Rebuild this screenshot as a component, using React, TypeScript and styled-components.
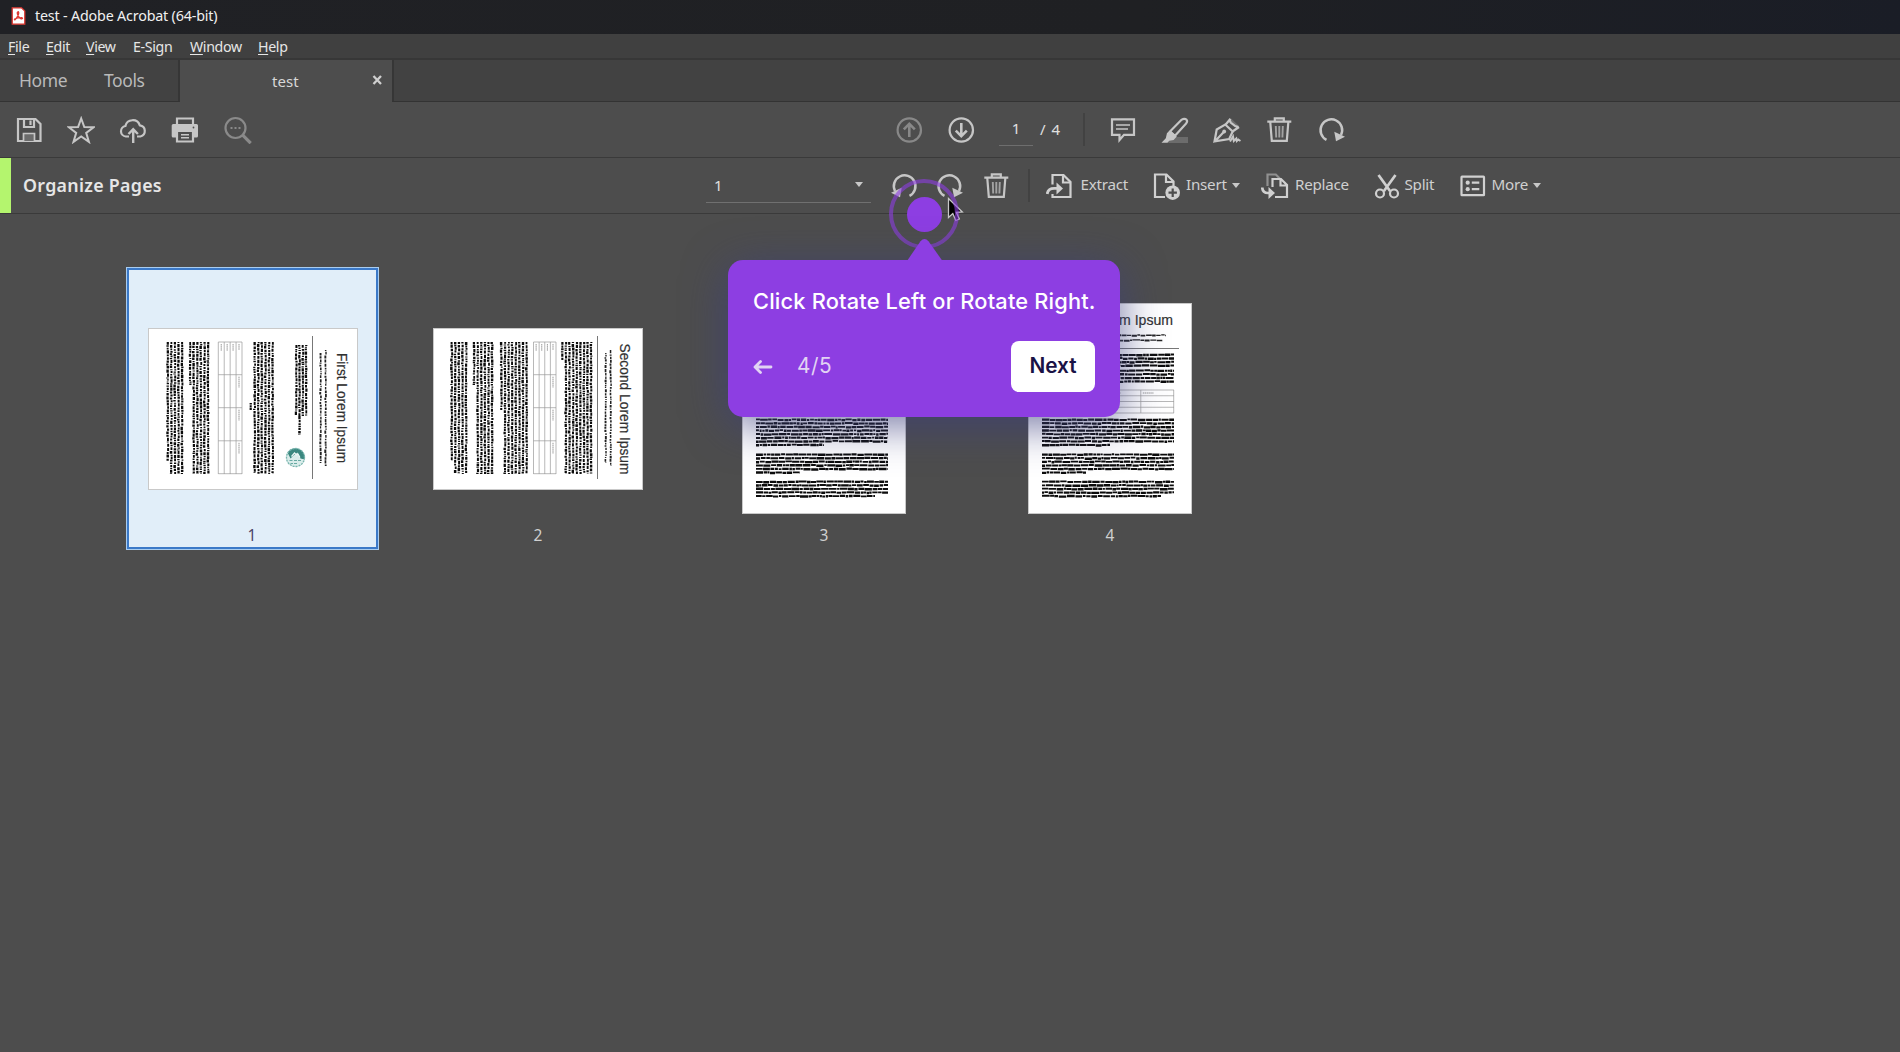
import React from "react";
import styled, { createGlobalStyle } from "styled-components";

const uiFont = `"Noto Sans", "Open Sans", sans-serif`;

const GlobalStyle = createGlobalStyle`
  * { box-sizing: border-box; }
  body { margin: 0; background: #4d4d4d; font-family: ${uiFont}; overflow: hidden; }
`;

/* ---------- frame ---------- */
const Window = styled.div`
  position: relative;
  width: 1900px;
  height: 1052px;
  display: flex;
  flex-direction: column;
  background: #4d4d4d;
  color: #d8d8d8;
  overflow: hidden;
`;

const TitleBar = styled.header`
  height: 34px;
  flex: none;
  display: flex;
  align-items: center;
  padding: 0 0 2px 11px;
  gap: 9px;
  background: linear-gradient(90deg, #202125 0%, #1f2023 60%, #1a1d26 100%);
  color: #f0f0f0;
`;

const MenuBar = styled.nav`
  height: 26px;
  flex: none;
  display: flex;
  align-items: center;
  background: #404040;
  border-bottom: 2px solid #373737;
  padding: 0 0 1px 8px;
  color: #e6e6e6;
`;

const MenuItem = styled.div<{ $w: number }>`
  width: ${(p) => p.$w}px;
  white-space: nowrap;
  u { text-underline-offset: 2px; }
`;

const TabStrip = styled.div`
  height: 42px;
  flex: none;
  display: flex;
  background: #424242;
`;

const TabGroup = styled.div`
  width: 180px;
  display: flex;
  align-items: center;
  padding-left: 19px;
  border-right: 2px solid #363636;
  border-bottom: 1px solid #333;
  color: #b9b9b9;
`;

const HomeTab = styled.div<{ $w: number }>`
  width: ${(p) => p.$w}px;
  white-space: nowrap;
`;

const DocumentTab = styled.div`
  width: 212px;
  display: grid;
  grid-template-columns: 180px 1fr;
  align-items: center;
  background: #4d4d4d;
`;

const DocumentName = styled.div`
  padding-left: 92px;
`;

const CloseGlyph = styled.svg`
  display: block;
  margin-top: -2px;
`;

const TabFiller = styled.div`
  flex: 1;
  border-left: 2px solid #363636;
  border-bottom: 1px solid #333;
`;

const Toolbar = styled.div`
  height: 56px;
  flex: none;
  display: flex;
  align-items: center;
  border-bottom: 1px solid #3a3a3a;
  color: #c6c6c6;
`;

const FileActions = styled.div`
  width: 895px;
  padding-left: 15px;
  display: flex;
  gap: 24px;
  svg:last-child { margin-left: 1px; }
`;

const PageNav = styled.div`
  width: 188px;
  display: flex;
  align-items: center;
`;

const NavButton = styled.div<{ $dim?: boolean }>`
  width: 52px;
  display: flex;
  color: ${(p) => (p.$dim ? "#888" : "inherit")};
`;

const PageField = styled.div`
  width: 34px;
  height: 33px;
  border-bottom: 1px solid #6e6e6e;
  display: flex;
  justify-content: center;
  align-items: center;
  padding-bottom: 2px;
  color: #e0e0e0;
`;

const PageTotal = styled.div`
  margin: 0 0 2px 7px;
  display: flex;
  gap: 6px;
  color: #e0e0e0;
`;

const Separator = styled.div`
  width: 2px;
  height: 33px;
  background: #424242;
`;

const Annotations = styled.div`
  display: flex;
  gap: 24.300px;
  padding-left: 23.500px;
`;

const OrganizeBar = styled(Toolbar)`
  height: 56px;
`;

const Accent = styled.div`
  width: 11px;
  align-self: stretch;
  background: #b4f56e;
`;

const OrganizeTitle = styled.div`
  width: 695px;
  padding-left: 12px;
  color: #e6e6e6;
`;

const PageSelect = styled.div`
  width: 165px;
  height: 34px;
  border-bottom: 1px solid #707070;
  display: flex;
  align-items: center;
  justify-content: space-between;
  padding: 0 8px 1px 8px;
  color: #e0e0e0;
`;

const RotateGroup = styled.div`
  width: 156.5px;
  display: flex;
  padding-left: 19px;
  gap: 18px;
`;

const Commands = styled.div`
  display: flex;
  padding-left: 16.500px;
`;

const Command = styled.div<{ $w: number; $iconW: number }>`
  width: ${(p) => p.$w}px;
  display: grid;
  grid-template-columns: ${(p) => p.$iconW}px auto auto;
  justify-content: start;
  align-items: center;
  white-space: nowrap;
  color: #d0d0d0;
`;

const CaretDown = styled.span`
  width: 0;
  height: 0;
  border: 4.5px solid transparent;
  border-top: 5px solid #c8c8c8;
  border-bottom: 0;
  margin-left: 5px;
`;

const Label = styled.span<{ $size: number; $ls?: number; $weight?: number }>`
  font-size: ${(p) => p.$size}px;
  letter-spacing: ${(p) => p.$ls ?? 0}px;
  font-weight: ${(p) => p.$weight ?? 400};
  line-height: 1.2;
`;

const CommandLabel = styled(Label).attrs({ $size: 15.2, $ls: -0.25 })`
  padding-bottom: 2px;
`;

const Icon = styled.svg.attrs({ viewBox: "0 0 28 28", width: 28, height: 28 })`
  display: block;
  flex: none;
  fill: none;
  stroke: currentColor;
  stroke-width: 2.2;
  .solid { fill: currentColor; stroke: none; }
  .soft { fill: #6c6c6c; stroke: none; }
`;

/* ---------- thumbnails ---------- */
const Thumbnails = styled.main`
  flex: 1;
  display: flex;
  gap: 33px;
  padding: 53px 0 0 126px;
  align-items: flex-start;
`;

const PageCell = styled.figure<{ $selected?: boolean }>`
  margin: 0;
  width: 253px;
  height: 283px;
  display: grid;
  grid-template-rows: 245px 1fr;
  justify-items: center;
  background: ${(p) => (p.$selected ? "#e1eef9" : "transparent")};
  border: 1px solid ${(p) => (p.$selected ? "#a9cdf0" : "transparent")};
  box-shadow: ${(p) => (p.$selected ? "inset 0 0 0 2px #3b79c8" : "none")};
  color: ${(p) => (p.$selected ? "#4b4668" : "#d0d0d0")};
`;

const PageHolder = styled.div<{ $selected: boolean; $rotated: boolean }>`
  display: flex;
  align-items: center;
  padding: ${(p) => (p.$rotated ? 37 : 35)}px ${(p) => (p.$selected ? 0 : 1)}px 0 ${(p) => (p.$selected ? 1 : 0)}px;
`;

const PageNumber = styled.figcaption`
  padding: 11px 1px 0 0;
`;

type Para = { y: number; lines: number; last: number; from?: number; to?: number; step?: number };
type PageSpec = {
  title?: string;
  titleX?: number;
  titleW?: number;
  baseline?: number;
  rotated: boolean;
  table: [number, number];
  logo?: boolean;
  paras: Para[];
};

const seeded = (seed: number) => () => {
  seed = (seed * 16807) % 2147483647;
  return seed / 2147483647;
};

/* One miniature line of body copy: word blobs of uneven length and height. */
function linePath(x0: number, x1: number, y: number, rnd: () => number, rotated: boolean, h: number) {
  let d = "";
  let x = x0;
  while (x < x1) {
    const w = Math.min(rotated ? 1 + rnd() * 2.4 : 2 + rnd() * 6, x1 - x);
    const t = y + rnd() * 0.6;
    const b = t + h - rnd() * 0.7;
    d += `M${x.toFixed(1)} ${t.toFixed(1)}h${w.toFixed(1)}V${b.toFixed(1)}h${(-w).toFixed(1)}z`;
    x += w + (rotated ? 0.5 + rnd() * 0.7 : 0.25 + rnd() * 0.6);
  }
  return d;
}

function PageDrawing({ page, seed }: { page: PageSpec; seed: number }) {
  const rnd = seeded(seed);
  const W = page.rotated ? 210 : 164;
  const H = page.rotated ? 162 : 211;
  let body = "";
  page.paras.forEach((p) => {
    const a = p.from ?? 14;
    const b = p.to ?? 146;
    const step = p.step ?? 3.6;
    for (let i = 0; i < p.lines; i++) {
      body += linePath(a, i === p.lines - 1 ? p.last : b, p.y + i * step, rnd, page.rotated, 2.5);
    }
  });
  const [t0, t1] = page.table;
  const rows = [0, 1, 2, 3, 4].map((i) => t0 + ((t1 - t0) * i) / 4);
  const cols = [14, 46.7, 79.7, 112.8, 145.7];
  return (
    <svg width={W} height={H} viewBox={`0 0 ${W} ${H}`}>
      <rect x=".5" y=".5" width={W - 1} height={H - 1} fill="#fff" stroke="#c9c9c9" />
      <g transform={page.rotated ? `translate(${W} 0) rotate(90)` : undefined}>
        {page.title && (
          <text
            x={page.titleX}
            y={page.baseline}
            fontFamily="Liberation Sans, Arial, sans-serif"
            fontSize="15"
            textLength={page.titleW}
            lengthAdjust="spacingAndGlyphs"
            fill="#303030"
            stroke="#303030"
            strokeWidth=".2"
          >
            {page.title}
          </text>
        )}
        <path
          d={linePath(22, 138, 31.2, rnd, page.rotated, 2) + linePath(25, 135, 36.2, rnd, page.rotated, 2)}
          fill="#222"
        />
        <path d="M8 45.5H151" stroke="#777" />
        <path d={body} fill="#0c0c0c" />
        <path
          d={rows.map((y) => `M14 ${y}H146`).join("") + cols.map((x) => `M${x} ${t0}V${t1}`).join("")}
          stroke="#999"
          strokeWidth=".7"
          fill="none"
        />
        <path
          d={
            [1, 2, 3].map((i) => `M16 ${rows[i] + 3}h7`).join("") +
            `M16 ${t0 + 3}h6` +
            [1, 2, 3].map((i) => `M${cols[i] + 2} ${t0 + 3}h11`).join("")
          }
          stroke="#999"
          strokeWidth="1"
          strokeDasharray="1.6 .5"
        />
        {page.logo && (
          <g transform="translate(129.5 62.5) rotate(-90)">
            <circle r="9.6" fill="#d9ecea" />
            <path d="M-8 -5A9.6 9.6 0 0 1 9.4 2L5 1 2 -5 -2 -2-5 1z" fill="#3a877f" />
            <path d="M-4-1l3-3.5 2 2 1.5-1 2 3.5" stroke="#e9f5f3" strokeWidth="1.2" fill="none" />
            <circle r="9" fill="none" stroke="#79b5ae" strokeWidth="1.3" strokeDasharray="2 1" />
            <path d="M-6 3h3m1.500 0h3m1 0h3M-5 6h2.500m1 0h3" stroke="#68aaa3" fill="none" />
          </g>
        )}
      </g>
    </svg>
  );
}

const tail: Para[] = [
  { y: 149.5, lines: 6, last: 57 },
  { y: 175.5, lines: 5, last: 133 },
];
const middle: Para[] = [{ y: 50.5, lines: 9, last: 32 }, { y: 115, lines: 8, last: 82 }];

const uprightParas: Para[] = [
  { y: 50.5, lines: 4, last: 146 },
  { y: 66.3, lines: 4, last: 146 },
  { y: 115.4, lines: 8, last: 82 },
  { y: 150.2, lines: 6, last: 58 },
  { y: 177.4, lines: 5, last: 133 },
];

const pages: PageSpec[] = [
  {
    title: "First Lorem Ipsum", titleX: 25, titleW: 110, baseline: 21.5, rotated: true,
    table: [116, 139.7], logo: true,
    paras: [
      { y: 50.5, lines: 4, last: 87, from: 17, to: 88, step: 3.3 },
      { y: 57, lines: 1, last: 107, from: 88 },
      { y: 84, lines: 6, last: 145 },
      { y: 106, lines: 1, last: 82, from: 75 },
      ...tail.map((p) => ({ ...p, y: p.y - 1 })),
    ],
  },
  {
    title: "Second Lorem Ipsum", titleX: 15.5, titleW: 131, baseline: 23.3, rotated: true,
    table: [87, 109.5], paras: [...middle, ...tail],
  },
  { rotated: false, table: [87, 110], paras: uprightParas },
  {
    title: "m Ipsum", titleX: 91, titleW: 54, baseline: 21.6, rotated: false,
    table: [87, 110], paras: uprightParas,
  },
];

/* ---------- guided tour ---------- */
const TourCard = styled.section`
  position: absolute;
  left: 728px;
  top: 260px;
  width: 392px;
  height: 157px;
  border-radius: 15px;
  background: #8d3ee2;
  box-shadow: 0 8px 44px rgba(60, 62, 126, 0.72);
  padding: 24px 25px 0 25px;
  color: #fff;
  font-family: "Inter", sans-serif;
`;

const TourText = styled.div`
  height: 57px;
  padding-top: 4px;
  line-height: 26px;
  white-space: nowrap;
`;

const TourFooter = styled.div`
  height: 51px;
  display: flex;
  align-items: center;
  color: #e1d3f3;
`;

const TourStep = styled.div`
  flex: 1;
  padding-left: 24px;
`;

const NextButton = styled.button`
  width: 84px;
  height: 51px;
  border: 0;
  border-radius: 8px;
  background: #fff;
  color: #1a1245;
  font-family: inherit;
  padding: 0;
`;

const TourPointer = styled.svg`
  position: absolute;
  left: 907px;
  top: 239px;
`;

const Beacon = styled.div`
  position: absolute;
  left: 889px;
  top: 179px;
  width: 70px;
  height: 70px;
  border-radius: 50%;
  border: 4px solid rgba(141, 62, 226, 0.6);
  display: flex;
  align-items: center;
  justify-content: center;
`;

const BeaconDot = styled.div`
  width: 35px;
  height: 35px;
  border-radius: 50%;
  background: #8d3ee2;
`;

const Cursor = styled.svg`
  position: absolute;
  left: 947px;
  top: 197px;
`;

/* ---------- icons ---------- */
const TrashIcon = () => (
  <Icon>
    <path d="M2.300 5.600H26.300M9.800 5.400V2.300h9V5.400M5.300 6.500L6.800 24.900h15L23.300 6.500" />
    <path d="M10.800 10l.4 11.500M14.300 10V21.500M17.800 10L17.400 21.500" strokeWidth="1.900" opacity=".7" />
  </Icon>
);

const RotateIcon = ({ left }: { left?: boolean }) => (
  <Icon>
    <g transform={left ? "translate(28 0) scale(-1 1)" : undefined}>
      <path d="M8.500 23.800A10.800 10.800 0 1 1 23 19" strokeWidth="2.500" />
      <path className="solid" d="M16.300 15.800L27 20.700 18 25.300z" />
    </g>
  </Icon>
);

const ArrowCircle = ({ up }: { up?: boolean }) => (
  <Icon>
    <g transform={up ? "translate(0 28) scale(1 -1)" : undefined}>
      <circle cx="14.300" cy="14" r="11.700" />
      <path d="M14.300 7v13M8.800 14.700L14.300 20.200l5.500-5.500" strokeWidth="2.600" />
    </g>
  </Icon>
);

const menu = [
  ["File", 38, 1], ["Edit", 40, 1], ["View", 47, 1], ["E-Sign", 57, 0], ["Window", 68, 1], ["Help", 60, 1],
] as const;

export default function App() {
  return (
    <Window>
      <GlobalStyle />
      <TitleBar>
        <svg width="15" height="18" viewBox="0 0 15 18">
          <path d="M1.200.8h9.300L13.800 4v13.200H1.200z" fill="#fff" stroke="#d9302a" strokeWidth="1.300" />
          <path d="M7 4.800c1.500 0 .4 4.800-2.800 7.800-1.700.6-.9-1.900 6.400-2 2.200.7-.2 1.900-1.800.4C6.700 9.200 5.600 5.200 7 4.800z" fill="none" stroke="#e03a34" strokeWidth="1.400" />
        </svg>
        <Label $size={14.3} $ls={-0.18}>test - Adobe Acrobat (64-bit)</Label>
      </TitleBar>

      <MenuBar>
        {menu.map(([name, w, mnemonic]) => (
          <MenuItem key={name} $w={w}>
            <Label $size={14.2} $ls={-0.35}>
              {mnemonic ? <u>{name[0]}</u> : name[0]}
              {name.slice(1)}
            </Label>
          </MenuItem>
        ))}
      </MenuBar>

      <TabStrip>
        <TabGroup>
          <HomeTab $w={85}><Label $size={17.5} $ls={-0.4}>Home</Label></HomeTab>
          <HomeTab $w={60}><Label $size={17.5} $ls={-0.4}>Tools</Label></HomeTab>
        </TabGroup>
        <DocumentTab>
          <DocumentName><Label $size={15} $ls={0.1}>test</Label></DocumentName>
          <CloseGlyph width="30" height="10" viewBox="0 0 30 10">
            <path d="M13.500 1l7.500 8M21 1l-7.500 8" stroke="#cfcfcf" strokeWidth="2.300" />
          </CloseGlyph>
        </DocumentTab>
        <TabFiller />
      </TabStrip>

      <Toolbar>
        <FileActions>
          <Icon>
            <path d="M3 3h17.500l5 5v17H3z" />
            <path d="M9 3v8h10V3" />
            <path d="M15.500 4.500v4.500" />
            <path className="soft" d="M9 18h10v7H9z" />
            <path d="M8.500 25v-7.500h11V25" strokeWidth="1.700" />
          </Icon>
          <Icon>
            <path d="M14.200 2.500l3.100 8.600 9.300.2-7.400 5.600 2.700 9-7.700-5.400-7.700 5.400 2.700-9L1.900 11.300l9.200-.2z" strokeWidth="2" />
          </Icon>
          <Icon>
            <path d="M10 20.500H6.800A5.300 5.300 0 0 1 6.400 10 7.500 7.500 0 0 1 20.800 9.300a5.700 5.700 0 0 1 .6 11.200H18" />
            <path d="M14.200 27V13.500M9.500 18l4.700-4.700L18.900 18" strokeWidth="2.400" />
          </Icon>
          <Icon>
            <path d="M6 9V2.500h16V9" />
            <path className="solid" d="M.7 9.500a1.500 1.500 0 0 1 1.500-1.500h23.300A1.500 1.500 0 0 1 27 9.500V20a1.500 1.500 0 0 1-1.500 1.500H23V16H5v5.500H2.200A1.500 1.500 0 0 1 .7 20z" />
            <path d="M6 16v9.500h16V16" />
            <path d="M10 18.700h8M10 21.700h8" strokeWidth="1.500" />
            <circle cx="22.500" cy="11.500" r=".9" fill="#4d4d4d" stroke="none" />
          </Icon>
          <Icon color="#8a8a8a">
            <circle cx="11.500" cy="12" r="10" />
            <path d="M18.700 19.200l8 8" strokeWidth="3.200" />
            <path d="M6.500 12h2M10.500 12h2M14.500 12h2" />
          </Icon>
        </FileActions>
        <PageNav>
          <NavButton $dim><ArrowCircle up /></NavButton>
          <NavButton><ArrowCircle /></NavButton>
          <PageField><Label $size={15}>1</Label></PageField>
          <PageTotal>
            <Label $size={15}>/</Label>
            <Label $size={15}>4</Label>
          </PageTotal>
        </PageNav>
        <Separator />
        <Annotations>
          <Icon>
            <path d="M3 3.300h22v15.500H15L10.500 24v-5.200H3z" />
            <path d="M7 9h14M7 13h12" strokeWidth="1.600" />
          </Icon>
          <Icon>
            <path className="soft" d="M10 21h17v6H7z" />
            <path d="M9 15.500L20.300 4c1.500-1.500 4-1.500 5-.5.9 1 .8 3-.4 4.300L14 19.800z" />
            <path className="solid" d="M6 17l3.300-2.500 6.500 6-3.200 3.500-4.300.7-1.800 2H.5l4.300-4.500z" />
          </Icon>
          <Icon>
            <path className="soft" d="M18 2.500l8 7.500-1 3-8-6z" />
            <path d="M1.500 25.500l2.200-12 8.500-5 7.500 7-3.500 7.500-14.200 2.300 9-9.500" />
            <circle className="solid" cx="11.200" cy="15.500" r="1.900" />
            <path d="M12.500 8.800l5-6M19.500 15.500l6.500-4.500M16.200 3l1.500 3.500 4.500 3.500 3 1" />
            <path d="M17 25.500l3-5 .8 4.500 2.500-2.500.5 2.500 1.500-1.500 2.200 1.500" strokeWidth="2" />
          </Icon>
          <TrashIcon />
          <RotateIcon />
        </Annotations>
      </Toolbar>

      <OrganizeBar>
        <Accent />
        <OrganizeTitle><Label $size={17.8} $weight={600} $ls={0.3}>Organize Pages</Label></OrganizeTitle>
        <PageSelect>
          <Label $size={15}>1</Label>
          <CaretDown />
        </PageSelect>
        <RotateGroup>
          <RotateIcon left />
          <RotateIcon />
          <TrashIcon />
        </RotateGroup>
        <Separator />
        <Commands>
          <Command $w={106.5} $iconW={34.5}>
            <Icon>
              <path d="M6.500 12.500V3H17.500l7 7v15H6.500v-3" />
              <path d="M17 3v7.500H24.500" />
              <path d="M1.200 22c.5-4 3-5.700 7-5.700h5" strokeWidth="2.800" />
              <path className="solid" d="M10.500 10.500l6.500 6-6.500 6z" />
            </Icon>
            <CommandLabel>Extract</CommandLabel>
          </Command>
          <Command $w={108.5} $iconW={33.5}>
            <Icon>
              <path d="M12 25H2V2.500h11.500l7 7V14" />
              <path d="M13 2.500V10h7.500" />
              <circle className="solid" cx="19.700" cy="20.700" r="7.300" />
              <path d="M19.700 16.500v8.400M15.500 20.700h8.400" stroke="#4d4d4d" />
            </Icon>
            <CommandLabel>Insert</CommandLabel>
            <CaretDown />
          </Command>
          <Command $w={112.5} $iconW={34}>
            <Icon>
              <path d="M6.500 14V2.500h8.300l4 4" stroke="#909090" />
              <path d="M11.500 15V7h8.500l6 6v12H14M19.500 7v6.500H26" />
              <path d="M1.300 15.500c0 4 2 5.500 5.700 5.500h3" strokeWidth="2.700" />
              <path className="solid" d="M7.500 15l6.500 6-6.500 6z" />
            </Icon>
            <CommandLabel>Replace</CommandLabel>
          </Command>
          <Command $w={85} $iconW={31}>
            <Icon>
              <path d="M4.500 3l11.700 16.200M21.500 3L9.800 19.200" strokeWidth="2.700" />
              <circle cx="6" cy="21.500" r="4" />
              <circle cx="20" cy="21.500" r="4" />
            </Icon>
            <CommandLabel>Split</CommandLabel>
          </Command>
          <Command $w={90} $iconW={33}>
            <Icon>
              <rect x="2.500" y="4.700" width="22.500" height="18.500" rx=".5" />
              <circle className="solid" cx="8.700" cy="10.700" r="2.100" />
              <circle className="solid" cx="8.700" cy="17.200" r="2.100" />
              <path d="M12.800 10.700h7.500M12.800 17.200h7.500" />
            </Icon>
            <CommandLabel>More</CommandLabel>
            <CaretDown />
          </Command>
        </Commands>
      </OrganizeBar>

      <Thumbnails>
        {pages.map((page, i) => (
          <PageCell key={i} $selected={i === 0}>
            <PageHolder $selected={i === 0} $rotated={page.rotated}>
              <PageDrawing page={page} seed={77 + i * 31} />
            </PageHolder>
            <PageNumber><Label $size={15.5}>{i + 1}</Label></PageNumber>
          </PageCell>
        ))}
      </Thumbnails>

      <Cursor width="18" height="26" viewBox="0 0 18 26">
        <path d="M1.500 1.500v19l4.300-4 3 7 3.500-1.500-3-6.700 6-.3z" fill="#000" stroke="#c8c8c8" strokeWidth="1.300" />
      </Cursor>
      <Beacon><BeaconDot /></Beacon>
      <TourCard>
        <TourText><Label $size={21.8} $weight={500} $ls={0.18}>Click Rotate Left or Rotate Right.</Label></TourText>
        <TourFooter>
          <svg width="20" height="14" viewBox="0 0 20 14" fill="none" stroke="currentColor" strokeWidth="2.800" strokeLinecap="round" strokeLinejoin="round">
            <path d="M18 7H2.500M7.500 1.500L2 7 7.500 12.500" />
          </svg>
          <TourStep><Label $size={20.8} $ls={0.5}>4/5</Label></TourStep>
          <NextButton><Label $size={20.8} $weight={600}>Next</Label></NextButton>
        </TourFooter>
      </TourCard>
      <TourPointer width="36" height="22" viewBox="0 0 36 22">
        <path d="M0 22L13.500 2.200Q17.500-2 21.500 2.200L35.500 22z" fill="#8d3ee2" />
      </TourPointer>
    </Window>
  );
}
